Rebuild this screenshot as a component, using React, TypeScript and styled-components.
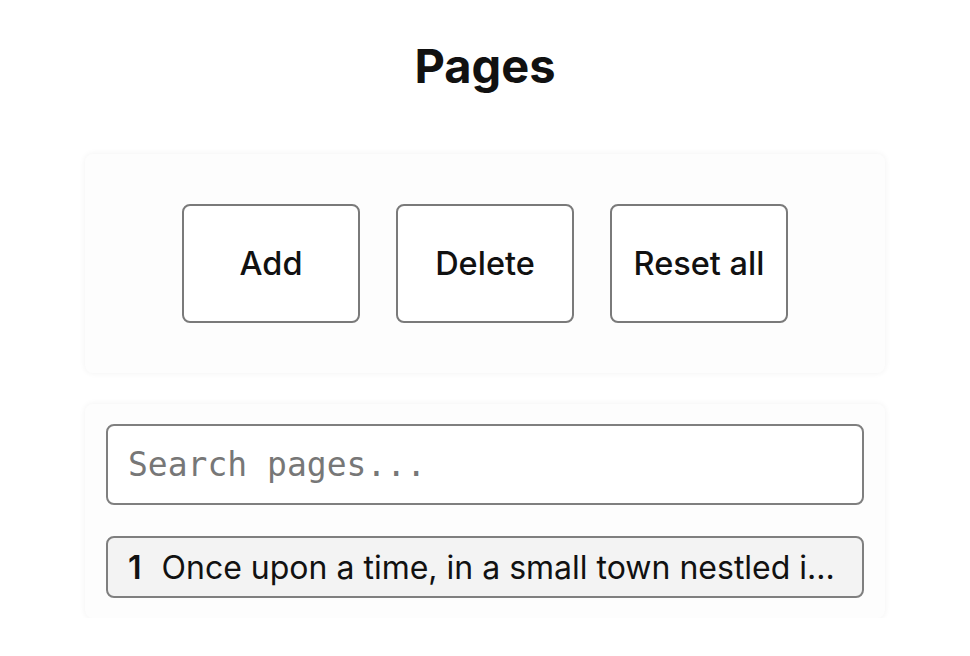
import React from "react";
import styled, { createGlobalStyle } from "styled-components";

const GlobalStyle = createGlobalStyle`
  html, body {
    margin: 0;
    padding: 0;
    background: #ffffff;
    font-family: Inter, "Noto Sans", sans-serif;
    color: #111111;
  }
  * { box-sizing: border-box; }
`;

const Page = styled.main`
  width: 800px;
  margin: 0 auto;
  padding-top: 30px;
  display: flex;
  flex-direction: column;
  gap: 31px;
`;

const Title = styled.h1`
  margin: 0 0 21px;
  text-align: center;
  font-size: 47px;
  font-weight: 700;
  line-height: 72px;
  color: #111111;
`;

const Card = styled.section<{ $pad: string }>`
  background: #fdfdfd;
  border-radius: 8px;
  box-shadow: 0 0 6px rgba(0, 0, 0, 0.06);
  padding: ${(p) => p.$pad};
`;

const Toolbar = styled.div`
  display: flex;
  justify-content: center;
  gap: 36px;
`;

const ActionButton = styled.button`
  width: 178px;
  height: 119px;
  background: #ffffff;
  border: 2px solid #7a7a7a;
  border-radius: 8px;
  font-family: Inter, "Noto Sans", sans-serif;
  font-size: 32.5px;
  font-weight: 500;
  color: #111111;
  cursor: pointer;
`;

const ListPanel = styled.div`
  display: flex;
  flex-direction: column;
  gap: 31px;
`;

const SearchInput = styled.input`
  width: 100%;
  height: 81px;
  border: 2px solid #7f7f7f;
  border-radius: 8px;
  background: #ffffff;
  padding: 0 20px;
  font-family: "DejaVu Sans Mono", monospace;
  font-size: 33px;
  color: #111111;
  outline: none;
  &::placeholder {
    color: #777777;
  }
`;

const PageItem = styled.div`
  height: 62px;
  border: 2px solid #7f7f7f;
  border-radius: 8px;
  background: #f3f3f3;
  padding: 0 20px;
  display: flex;
  align-items: center;
  gap: 20px;
  font-size: 32px;
  overflow: hidden;
`;

const PageNumber = styled.span`
  font-weight: 600;
  flex: none;
`;

const PageText = styled.span`
  font-weight: 400;
  white-space: nowrap;
  overflow: hidden;
  text-overflow: ellipsis;
  min-width: 0;
`;

export default function App() {
  return (
    <>
      <GlobalStyle />
      <Page>
        <Title>Pages</Title>
        <Card $pad="50px 0">
          <Toolbar>
            <ActionButton>Add</ActionButton>
            <ActionButton>Delete</ActionButton>
            <ActionButton>Reset all</ActionButton>
          </Toolbar>
        </Card>
        <Card $pad="20px 21px">
          <ListPanel>
            <SearchInput placeholder="Search pages..." />
            <PageItem>
              <PageNumber>1</PageNumber>
              <PageText>Once upon a time, in a small town nestled i...</PageText>
            </PageItem>
          </ListPanel>
        </Card>
      </Page>
    </>
  );
}
